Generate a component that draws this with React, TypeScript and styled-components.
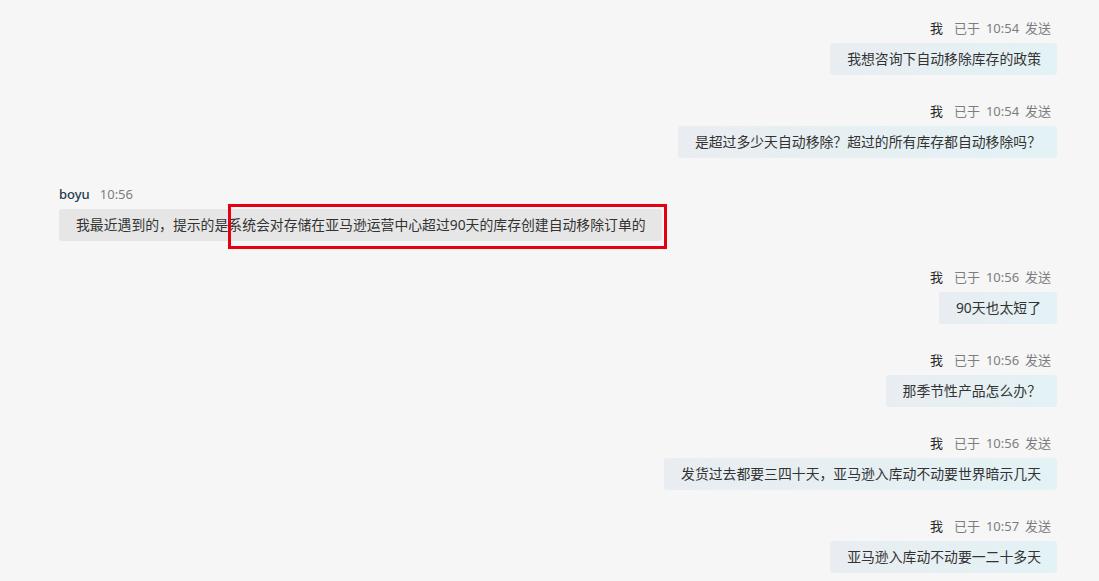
import React from "react";
import styled, { createGlobalStyle, css } from "styled-components";

const Global = createGlobalStyle`
  html, body { margin: 0; padding: 0; background: #f6f6f6; }
  body { font-family: "Noto Sans", "Noto Sans CJK SC", sans-serif; }
`;

const Page = styled.div`
  width: 1099px;
  height: 581px;
  overflow: hidden;
  background: #f6f6f6;
  box-sizing: border-box;
  padding: 20px 42px 0 59px;
`;

const List = styled.div`
  display: flex;
  flex-direction: column;
  gap: 28px;
`;

const Message = styled.div<{ $mine: boolean }>`
  display: flex;
  flex-direction: column;
  align-items: ${(p) => (p.$mine ? "flex-end" : "flex-start")};
  gap: 7px;
`;

const Meta = styled.div<{ $mine: boolean }>`
  display: flex;
  align-items: center;
  gap: ${(p) => (p.$mine ? "11px" : "10px")};
  height: 16px;
  font-size: 13px;
  line-height: 16px;
  padding-right: ${(p) => (p.$mine ? "6px" : "0")};
`;

const Sender = styled.span<{ $mine: boolean }>`
  color: ${(p) => (p.$mine ? "#2a2a2a" : "#1f3a4d")};
  font-weight: ${(p) => (p.$mine ? 400 : 500)};
`;

const Time = styled.span`
  color: #7d7d7d;
  word-spacing: 2.5px;
`;

const Bubble = styled.div<{ $mine: boolean }>`
  position: relative;
  height: 32px;
  line-height: 32px;
  padding: 0 16px 0 17px;
  border-radius: 3px;
  font-size: 13.85px;
  color: #333;
  white-space: nowrap;
  ${(p) =>
    p.$mine
      ? css`
          background: linear-gradient(to right, #e9edf1, #e3f2f5);
        `
      : css`
          background: #e6e6e6;
        `}
`;

const Highlight = styled.div`
  position: absolute;
  left: 169px;
  top: -5px;
  width: 439px;
  height: 45px;
  box-sizing: border-box;
  border: 3px solid #e60012;
  pointer-events: none;
`;

type Msg = { mine: boolean; name: string; time: string; text: string; mark?: boolean };

const messages: Msg[] = [
  { mine: true, name: "我", time: "10:54", text: "我想咨询下自动移除库存的政策" },
  { mine: true, name: "我", time: "10:54", text: "是超过多少天自动移除？超过的所有库存都自动移除吗？" },
  { mine: false, name: "boyu", time: "10:56", text: "我最近遇到的，提示的是系统会对存储在亚马逊运营中心超过90天的库存创建自动移除订单的", mark: true },
  { mine: true, name: "我", time: "10:56", text: "90天也太短了" },
  { mine: true, name: "我", time: "10:56", text: "那季节性产品怎么办？" },
  { mine: true, name: "我", time: "10:56", text: "发货过去都要三四十天，亚马逊入库动不动要世界暗示几天" },
  { mine: true, name: "我", time: "10:57", text: "亚马逊入库动不动要一二十多天" },
];

export default function App() {
  return (
    <>
      <Global />
      <Page>
        <List>
          {messages.map((m, i) => (
            <Message key={i} $mine={m.mine}>
              <Meta $mine={m.mine}>
                <Sender $mine={m.mine}>{m.name}</Sender>
                <Time>{m.mine ? `已于 ${m.time} 发送` : m.time}</Time>
              </Meta>
              <Bubble $mine={m.mine}>
                {m.text}
                {m.mark && <Highlight />}
              </Bubble>
            </Message>
          ))}
        </List>
      </Page>
    </>
  );
}
